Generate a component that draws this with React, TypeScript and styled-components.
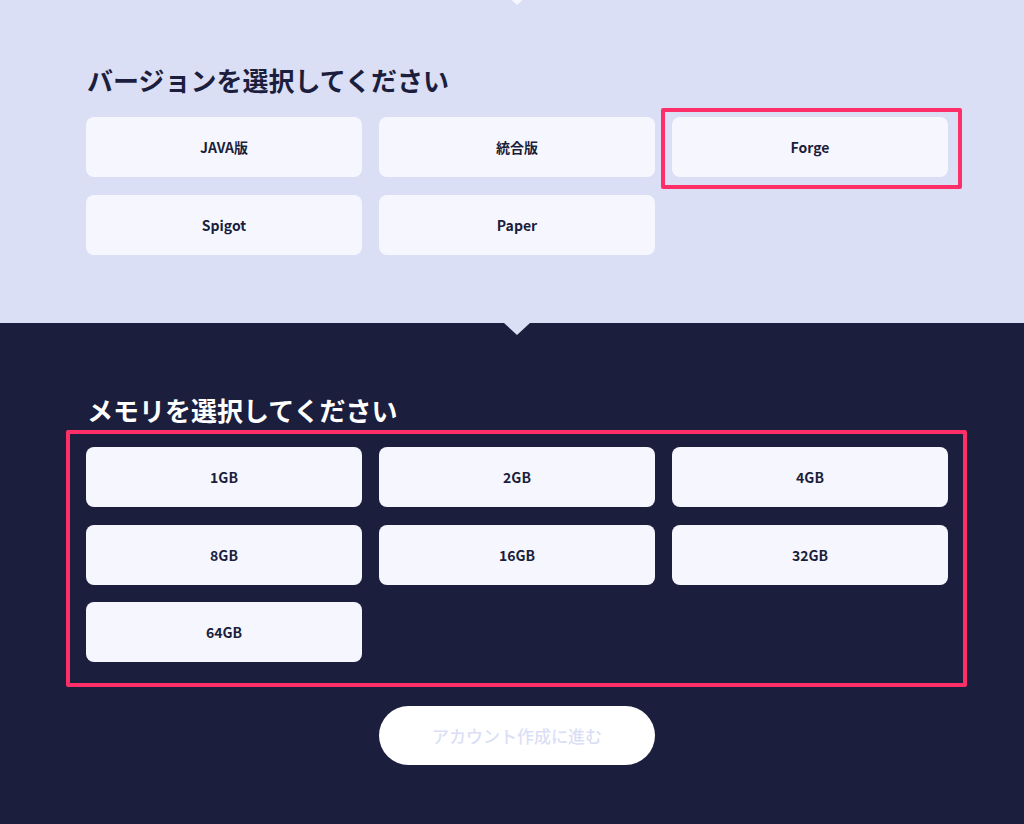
import React, { useState } from 'react';
import styled, { createGlobalStyle } from 'styled-components';

const GlobalStyle = createGlobalStyle`
  html, body {
    margin: 0;
    padding: 0;
    background: #1b1e3c;
  }
  body {
    font-family: "Noto Sans CJK JP", "Noto Sans", sans-serif;
    -webkit-font-smoothing: antialiased;
  }
`;

const Section = styled.section<{ $dark?: boolean }>`
  position: relative;
  background: ${(p) => (p.$dark ? '#1b1e3c' : '#dbdff5')};
  padding: ${(p) => (p.$dark ? '69px 0 59px' : '62px 0 68.5px')};

  /* pointer from the section above */
  &::before {
    content: '';
    position: absolute;
    top: ${(p) => (p.$dark ? '0' : '-7px')};
    left: 504px;
    border-left: 13px solid transparent;
    border-right: 13px solid transparent;
    border-top: 12px solid ${(p) => (p.$dark ? '#dbdff5' : '#f6f7fe')};
  }
`;

const Inner = styled.div`
  width: 862px;
  margin-left: 86px;
  display: flex;
  flex-direction: column;
`;

const Heading = styled.h2<{ $light?: boolean }>`
  margin: 0 0 19px;
  font-size: 26px;
  line-height: 36px;
  font-weight: 700;
  color: ${(p) => (p.$light ? '#ffffff' : '#1b1e3c')};
  padding-left: 1px;
`;

const Grid = styled.div`
  position: relative;
  display: grid;
  grid-template-columns: repeat(3, 276px);
  column-gap: 17px;
  row-gap: 17.5px;
`;

const Option = styled.button`
  position: relative;
  height: 60px;
  border: none;
  border-radius: 8px;
  background: #f6f7fe;
  color: #1b1e3c;
  font-family: inherit;
  font-size: 14px;
  font-weight: 700;
  cursor: pointer;
  padding: 0;
`;

const Highlight = styled.span<{ $t: number; $r: number; $b: number; $l: number }>`
  position: absolute;
  top: ${(p) => p.$t}px;
  right: ${(p) => p.$r}px;
  bottom: ${(p) => p.$b}px;
  left: ${(p) => p.$l}px;
  border: 4px solid #fe2f68;
  border-radius: 2px;
  pointer-events: none;
`;

const Footer = styled.div`
  display: flex;
  justify-content: center;
  margin-top: 44px;
`;

const Proceed = styled.button`
  width: 276px;
  height: 59px;
  border: none;
  border-radius: 30px;
  background: #ffffff;
  color: #dbdff5;
  font-family: inherit;
  font-size: 17px;
  font-weight: 500;
  cursor: not-allowed;
`;

const versions = ['JAVA版', '統合版', 'Forge', 'Spigot', 'Paper'];
const memories = ['1GB', '2GB', '4GB', '8GB', '16GB', '32GB', '64GB'];

const App: React.FC = () => {
  const [version, setVersion] = useState<string>('Forge');
  const [memory, setMemory] = useState<string | null>(null);

  return (
    <>
      <GlobalStyle />
      <Section>
        <Inner>
          <Heading>バージョンを選択してください</Heading>
          <Grid>
            {versions.map((v) => (
              <Option key={v} onClick={() => setVersion(v)}>
                {v}
                {version === v && <Highlight $t={-9} $r={-14} $b={-12} $l={-11} />}
              </Option>
            ))}
          </Grid>
        </Inner>
      </Section>
      <Section $dark>
        <Inner>
          <Heading $light>メモリを選択してください</Heading>
          <Grid>
            {memories.map((m) => (
              <Option key={m} onClick={() => setMemory(m)}>
                {m}
              </Option>
            ))}
            {!memory && <Highlight $t={-17} $r={-19} $b={-25} $l={-20} />}
          </Grid>
          <Footer>
            <Proceed disabled={!memory}>アカウント作成に進む</Proceed>
          </Footer>
        </Inner>
      </Section>
    </>
  );
};

export default App;
